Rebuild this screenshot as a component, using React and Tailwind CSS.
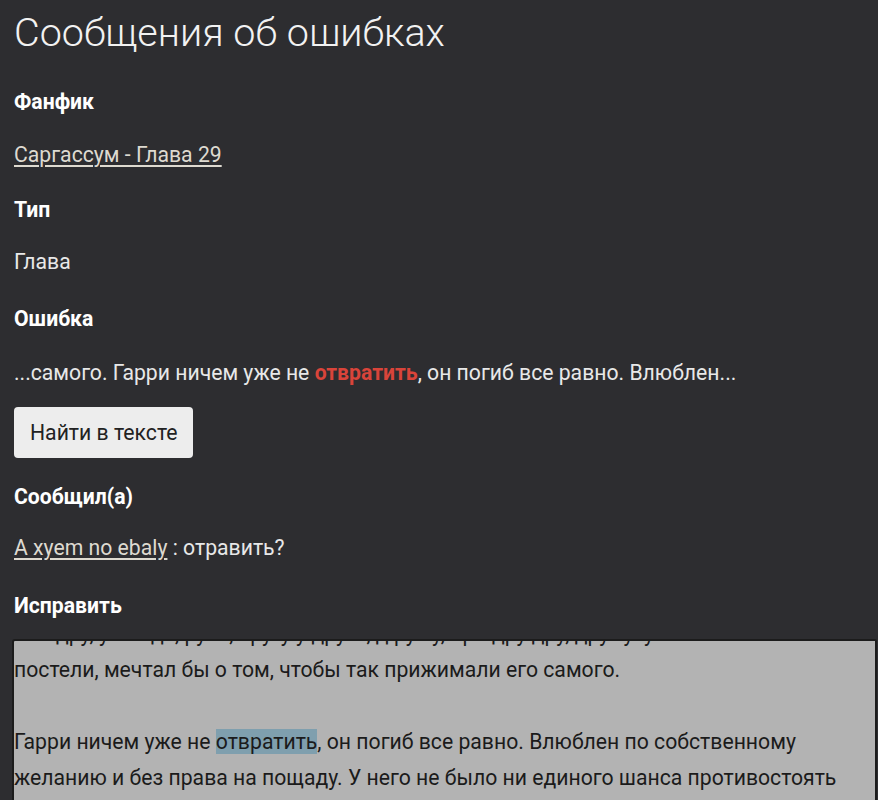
import React from "react";

export default function App() {
  const font = { fontFamily: "Roboto, 'Noto Sans', sans-serif" };
  return (
    <div className="min-h-[800px] w-full bg-[#2d2d30] text-[#e8e8e8] overflow-hidden" style={font}>
      <div className="flex flex-col px-[14px]">
        <h1 className="mt-[9px] text-[39.5px] leading-[48px] font-light text-[#f2f2f2] whitespace-nowrap">
          Сообщения об ошибках
        </h1>

        <div className="mt-[31px] text-[21.2px] leading-[28px] font-bold text-white">Фанфик</div>
        <div className="mt-[25px] text-[21.2px] leading-[28px]">
          <a href="#" className="text-[#dedad0] underline decoration-[#dedad0] underline-offset-[3px]">
            Саргассум - Глава 29
          </a>
        </div>

        <div className="mt-[27px] text-[21.2px] leading-[28px] font-bold text-white">Тип</div>
        <div className="mt-[24px] text-[21.2px] leading-[28px]">Глава</div>

        <div className="mt-[29px] text-[21.2px] leading-[28px] font-bold text-white">Ошибка</div>
        <div className="mt-[26px] text-[21.2px] leading-[28px]">
          ...самого. Гарри ничем уже не{" "}
          <span className="font-bold text-[#d9443a]">отвратить</span>, он погиб все равно. Влюблен...
        </div>

        <div className="mt-[20px] flex">
          <button className="h-[51px] px-4 rounded-[4px] bg-[#ededed] text-[#222] text-[21.2px]">
            Найти в тексте
          </button>
        </div>

        <div className="mt-[25px] text-[21.2px] leading-[28px] font-bold text-white">Сообщил(а)</div>
        <div className="mt-[23px] text-[21.2px] leading-[28px]">
          <a href="#" className="text-[#dedad0] underline decoration-[#dedad0] underline-offset-[3px]">
            A xyem no ebaly
          </a>{" "}
          : отравить?
        </div>

        <div className="mt-[30px] text-[21.2px] leading-[28px] font-bold text-white">Исправить</div>
      </div>

      <div className="mt-[19px] ml-[12px] mr-[1px] h-[200px] overflow-hidden rounded-tl-[3px] rounded-tr-[2px] border-2 border-[#1c1c1c] bg-[#b3b3b3] text-[#1b1b1b]">
        <div className="mt-[-25px] text-[21.2px] leading-[36px] whitespace-nowrap">
          <div>&nbsp;&nbsp;&nbsp;&nbsp;&nbsp;&nbsp;&nbsp;&nbsp;дру, ужи где, рука, кругу у друга, д ружу, при дру дру, друг уху</div>
          <div>постели, мечтал бы о том, чтобы так прижимали его самого.</div>
          <div>&nbsp;</div>
          <div>
            Гарри ничем уже не <span className="bg-[#7f9fae]">отвратить</span>, он погиб все равно. Влюблен по собственному
          </div>
          <div>желанию и без права на пощаду. У него не было ни единого шанса противостоять</div>
          <div>этому чувству.</div>
        </div>
      </div>
    </div>
  );
}
